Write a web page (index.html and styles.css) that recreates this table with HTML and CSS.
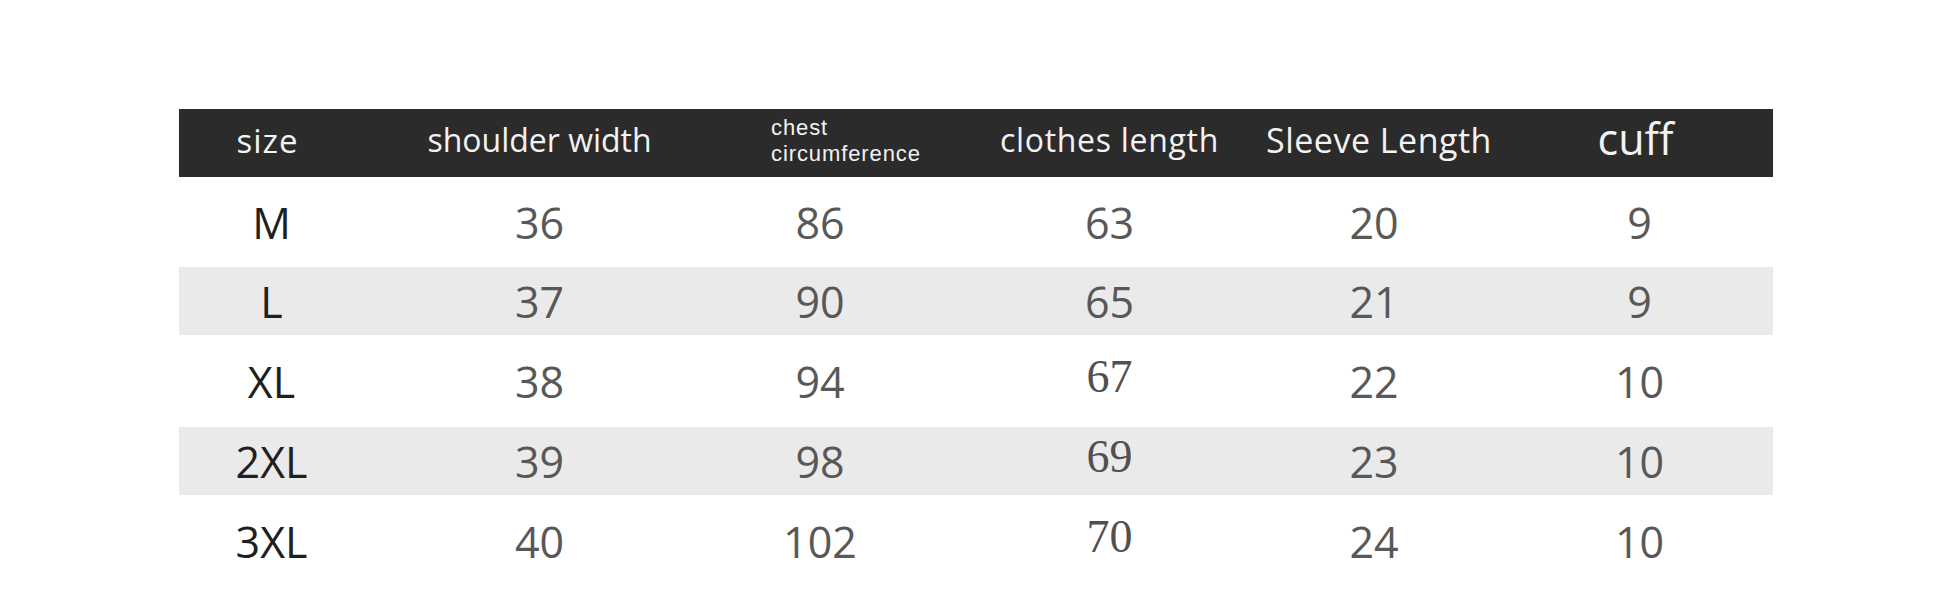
FILE: index.html
```html
<!DOCTYPE html>
<html>
<head>
<meta charset="utf-8">
<link rel="stylesheet" href="styles.css">
</head>
<body>
<div class="page">
  <div class="table">
    <div class="row head">
      <div class="cell c1 h-size">size</div>
      <div class="cell c2 h-shoulder">shoulder width</div>
      <div class="cell c3 chest"><span class="chest-text"><span class="line">chest</span><span class="line">circumference</span></span></div>
      <div class="cell c4 h-clothes">clothes length</div>
      <div class="cell c5 h-sleeve">Sleeve Length</div>
      <div class="cell c6 cuff">cuff</div>
    </div>
    <div class="row tall">
      <div class="cell c1 sz">M</div>
      <div class="cell c2">36</div>
      <div class="cell c3">86</div>
      <div class="cell c4">63</div>
      <div class="cell c5">20</div>
      <div class="cell c6">9</div>
    </div>
    <div class="row short grey">
      <div class="cell c1 sz">L</div>
      <div class="cell c2">37</div>
      <div class="cell c3">90</div>
      <div class="cell c4">65</div>
      <div class="cell c5">21</div>
      <div class="cell c6">9</div>
    </div>
    <div class="row tall">
      <div class="cell c1 sz">XL</div>
      <div class="cell c2">38</div>
      <div class="cell c3">94</div>
      <div class="cell c4 thin">67</div>
      <div class="cell c5">22</div>
      <div class="cell c6">10</div>
    </div>
    <div class="row short grey">
      <div class="cell c1 sz">2XL</div>
      <div class="cell c2">39</div>
      <div class="cell c3">98</div>
      <div class="cell c4 thin">69</div>
      <div class="cell c5">23</div>
      <div class="cell c6">10</div>
    </div>
    <div class="row tall last">
      <div class="cell c1 sz">3XL</div>
      <div class="cell c2">40</div>
      <div class="cell c3">102</div>
      <div class="cell c4 thin">70</div>
      <div class="cell c5">24</div>
      <div class="cell c6">10</div>
    </div>
  </div>
</div>
</body>
</html>
```
FILE: styles.css
```css
html, body {
  margin: 0;
  padding: 0;
  background: #ffffff;
}
.page {
  padding: 109px 0 0 179px;
  font-family: "Open Sans", "Noto Sans", sans-serif;
}
.table {
  width: 1594px;
}
.row {
  display: grid;
  grid-template-columns: 223px 275px 286px 279px 264px 267px;
  color: #585858;
  font-size: 43px;
}
.row.tall { height: 90px; }
.row.tall:nth-child(4),
.row.tall.last { height: 92px; }
.row.short { height: 68px; }
.row.grey { background: #eaeaea; }
.cell {
  display: flex;
  align-items: center;
  justify-content: center;
  line-height: 1;
  white-space: nowrap;
}
.c1 { padding-right: 46px; }
.c1.sz { padding-right: 38px; }
.c4 { padding-left: 14px; }
.sz { color: #1f1f1f; }
.thin {
  font-family: "Liberation Serif", serif;
  font-weight: 400;
  padding-bottom: 8px;
  font-size: 46px;
  color: #505050;
}
.head {
  height: 68px;
  background: #2b2b2b;
  color: #f2f2f2;
  font-size: 32px;
}
.head .cell { padding-bottom: 6px; }
.head .h-size {
  font-size: 33px;
  letter-spacing: 1px;
}
.head .h-clothes {
  letter-spacing: 0.7px;
}
.head .h-sleeve {
  font-size: 34px;
  letter-spacing: 0.5px;
  padding-left: 10px;
}
.head .chest {
  justify-content: flex-start;
  padding-left: 94px;
  padding-bottom: 4px;
}
.chest-text {
  display: flex;
  flex-direction: column;
  font-family: "Liberation Sans", sans-serif;
  font-size: 22px;
  letter-spacing: 0.9px;
}
.chest-text .line {
  display: block;
  height: 26px;
  line-height: 26px;
}
.head .cuff {
  font-size: 43px;
  padding-bottom: 10px;
  padding-right: 8px;
}
```
